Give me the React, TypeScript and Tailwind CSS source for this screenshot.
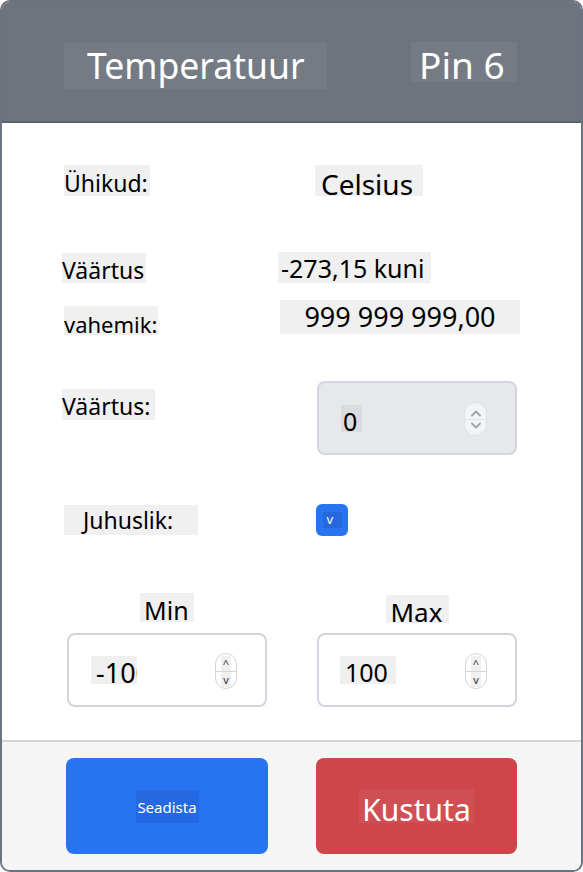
function Chevron({ up }: { up?: boolean }) {
  return (
    <svg width="12" height="8" viewBox="0 0 12 8" fill="none" className="block">
      <path
        d={up ? "M2 6.5 L6 2.5 L10 6.5" : "M2 1.5 L6 5.5 L10 1.5"}
        stroke="#9ca3af"
        strokeWidth="1.8"
        strokeLinecap="round"
        strokeLinejoin="round"
      />
    </svg>
  );
}

function SmallSpinner() {
  return (
    <div className="w-[22px] h-[36px] rounded-full border border-[#d1d5db] bg-white flex flex-col items-center justify-center overflow-hidden">
      <span className="bg-[#f0f0f0] text-[11px] leading-[15px] px-[2px] text-[#333]">^</span>
      <div className="w-full h-px bg-[#d6d6d6]" />
      <span className="bg-[#f0f0f0] text-[11px] leading-[15px] px-[2px] text-[#333]">v</span>
    </div>
  );
}

export default function App() {
  return (
    <div className="w-[583px] h-[872px] border-2 border-[#6b7280] rounded-[10px] overflow-hidden flex flex-col bg-white text-black font-['Noto_Sans','Open_Sans',sans-serif]">
      {/* Header */}
      <div className="h-[121px] shrink-0 bg-[#6d747d] border-b-2 border-[#5c636b] flex items-start">
        <div className="ml-[62px] mt-[41px] w-[263px] h-[46px] bg-[#747b84] pl-[23px] pt-[5px] text-white text-[35.5px] leading-none">
          Temperatuur
        </div>
        <div className="ml-[84px] mt-[40px] w-[106px] h-[40px] bg-[#747b84] pl-[8px] pt-[4px] text-white text-[37px] leading-none">
          Pin 6
        </div>
      </div>

      {/* Body */}
      <div className="flex-1 flex flex-col pt-[42px]">
        <div className="flex items-start">
          <div className="ml-[62px] w-[86px] h-[31px] bg-[#f0f0f0] pt-[7px] text-[23px] leading-none">Ühikud:</div>
          <div className="ml-[165px] w-[108px] h-[31px] bg-[#f0f0f0] pl-[6px] pt-[5px] text-[28px] leading-none">Celsius</div>
        </div>

        <div className="flex items-start mt-[56px]">
          <div className="ml-[60px] mt-[1px] w-[84px] h-[30px] bg-[#f0f0f0] pt-[6px] text-[23px] leading-none">Väärtus</div>
          <div className="ml-[132px] w-[153px] h-[31px] bg-[#f0f0f0] pl-[3px] pt-[4px] text-[25px] leading-none">-273,15 kuni</div>
        </div>

        <div className="flex items-start mt-[17px]">
          <div className="ml-[62px] mt-[6px] w-[94px] h-[29px] bg-[#f0f0f0] pt-[7px] text-[22px] leading-none">vahemik:</div>
          <div className="ml-[122px] w-[240px] h-[34px] bg-[#f0f0f0] pt-[3px] text-center text-[27px] leading-none">999 999 999,00</div>
        </div>

        <div className="flex items-start mt-[46px]">
          <div className="ml-[60px] mt-[8px] w-[93px] h-[31px] bg-[#f0f0f0] pt-[6px] text-[23px] leading-none">Väärtus:</div>
          <div className="ml-[162px] w-[200px] h-[74px] bg-[#e6e8eb] border-2 border-[#d3d6da] rounded-[8px] flex items-start pl-[22px] pr-[28px]">
            <span className="mt-[22px] w-[21px] h-[27px] bg-[#d9dbde] pl-[2px] pt-[4px] text-[25px] leading-none">0</span>
            <div className="ml-auto mt-[19px] w-[23px] h-[34px] rounded-full border border-[#dfe1e4] bg-[#f3f4f6] flex flex-col items-center justify-center">
              <Chevron up />
              <div className="w-full h-px bg-[#e1e3e6] my-[2px]" />
              <Chevron />
            </div>
          </div>
        </div>

        <div className="flex items-start mt-[49px]">
          <div className="ml-[62px] mt-[1px] w-[134px] h-[30px] bg-[#f0f0f0] pl-[19px] pt-[4px] text-[23px] leading-none">Juhuslik:</div>
          <div className="ml-[118px] w-[32px] h-[32px] rounded-[6px] bg-[#2873f0] flex items-center justify-center">
            <span className="w-[19px] h-[16px] bg-[#2468dc] text-white text-[13px] leading-[14px] pl-[4px]">v</span>
          </div>
        </div>

        <div className="flex items-start mt-[57px] ml-[65px] gap-[50px]">
          <div className="w-[200px] flex flex-col items-center">
            <div className="w-[54px] h-[29px] bg-[#f0f0f0] pl-[4px] pt-[5px] text-[25px] leading-none">Min</div>
            <div className="mt-[11px] w-[200px] h-[74px] bg-white border-2 border-[#d1d5db] rounded-[8px] flex items-start pl-[22px] pr-[28px]">
              <span className="mt-[21px] w-[46px] h-[28px] overflow-hidden whitespace-nowrap bg-[#efefef] pl-[5px] pt-[3px] text-[27px] leading-none">-100</span>
              <div className="ml-auto mt-[18px]">
                <SmallSpinner />
              </div>
            </div>
          </div>
          <div className="w-[200px] flex flex-col items-center">
            <div className="mt-[2px] w-[63px] h-[28px] bg-[#f0f0f0] pl-[5px] pt-[4px] text-[26px] leading-none">Max</div>
            <div className="mt-[10px] w-[200px] h-[74px] bg-white border-2 border-[#d1d5db] rounded-[8px] flex items-start pl-[21px] pr-[28px]">
              <span className="mt-[21px] w-[56px] h-[28px] bg-[#efefef] pl-[5px] pt-[4px] text-[25px] leading-none">100</span>
              <div className="ml-auto mt-[18px]">
                <SmallSpinner />
              </div>
            </div>
          </div>
        </div>
      </div>

      {/* Footer */}
      <div className="h-[130px] shrink-0 border-t-2 border-[#d4d4d4] bg-[#f5f5f5] flex items-start gap-[48px] pl-[64px] pt-[16px]">
        <button className="w-[202px] h-[96px] rounded-[8px] bg-[#2873f0] flex items-center justify-center">
          <span className="w-[63px] h-[33px] bg-[#2569e2] text-white text-[15px] leading-[35px] text-center">Seadista</span>
        </button>
        <button className="w-[201px] h-[96px] rounded-[8px] bg-[#cc464c] flex items-center justify-center">
          <span className="w-[115px] h-[34px] bg-[#d04f54] text-white text-[30px] leading-none pt-[6px] text-center">Kustuta</span>
        </button>
      </div>
    </div>
  );
}
